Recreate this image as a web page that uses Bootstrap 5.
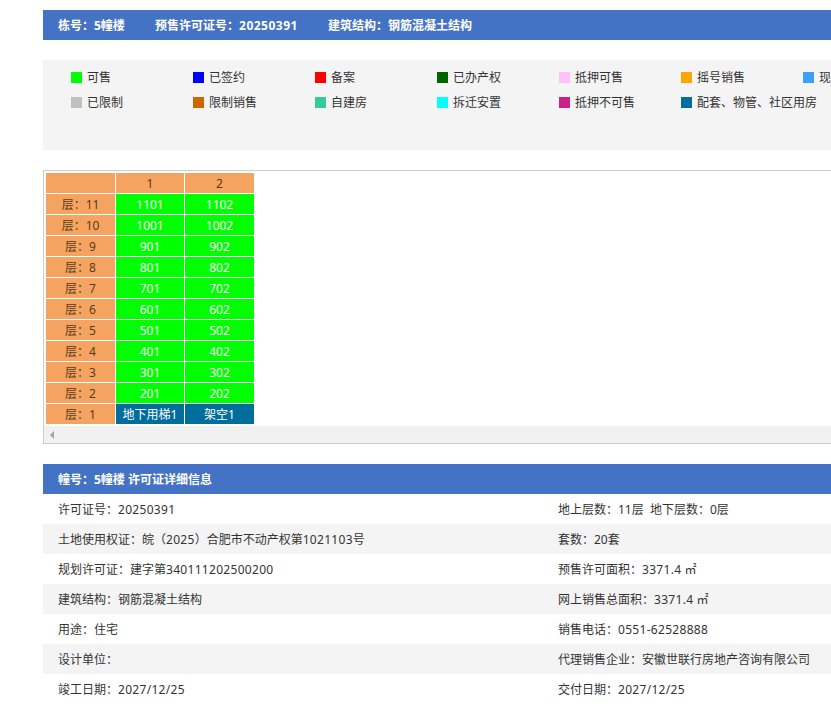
<!DOCTYPE html>
<html lang="zh-CN">
<head>
    <meta charset="UTF-8">
    <meta name="viewport" content="width=device-width, initial-scale=1.0">
    <title>楼盘表</title>
    <link href="https://cdn.jsdelivr.net/npm/bootstrap@5.3.3/dist/css/bootstrap.min.css" rel="stylesheet">
    <style>
        html, body {
            overflow: hidden;
        }

        body {
            font-family: "Noto Sans", "Noto Sans CJK SC", sans-serif;
            font-size: 12px;
            color: #333;
        }

        .page-wrap {
            width: 1000px;
            margin: 10px 0 0 43px;
        }

        .title-bar {
            height: 30px;
            line-height: 32px;
            padding-left: 15px;
            background: #4472c4;
            color: #fff;
            font-weight: 700;
        }

        .title-part {
            margin-right: 27px;
        }

        .num {
            letter-spacing: .3px;
        }

        .title-bar .num {
            letter-spacing: .5px;
        }

        .legend-box {
            height: 90px;
            margin: 20px 0;
            padding: 5px 0 0 28px;
            background: #f4f4f4;
        }

        .legend-item {
            width: 122px;
            height: 25px;
            line-height: 25px;
            white-space: nowrap;
        }

        .swatch {
            width: 11px;
            height: 11px;
            margin-right: 5px;
        }

        .build-box {
            height: 274px;
            border: 1px solid #ccc;
        }

        .build-table {
            border-collapse: separate;
            border-spacing: 1px;
            margin: 1px 0 0 1px;
            width: 210px;
            table-layout: fixed;
        }

        .col-floor, .col-last {
            width: 69px;
        }

        .col-first {
            width: 68px;
        }

        .build-table td {
            height: 20px;
            padding: 2px 0 0;
            text-align: center;
            line-height: 18px;
        }

        .floor {
            background: #f4a460;
            color: #5b3a1c;
        }

        .sale {
            background: #00ff00;
            color: #fff;
        }

        .support {
            background: #006e9c;
            color: #fff;
        }

        .h-scroll {
            height: 17px;
            margin-top: 1px;
            background: #f1f1f1;
            padding-left: 6px;
        }

        .arrow-left {
            width: 0;
            height: 0;
            border-top: 4px solid transparent;
            border-bottom: 4px solid transparent;
            border-right: 4px solid #a3a3a3;
        }

        .detail-title {
            margin-top: 20px;
        }

        .detail-row {
            height: 30px;
            line-height: 32px;
        }

        .detail-row:nth-child(even) {
            background: #f4f4f4;
        }

        .detail-cell {
            width: 500px;
            padding-left: 15px;
        }
    </style>
</head>
<body class="bg-white">
<div class="page-wrap">
    <div class="title-bar">
        <span class="title-part">栋号：5幢楼</span>
        <span class="title-part">预售许可证号：<span class="num">20250391</span></span>
        <span class="title-part">建筑结构：钢筋混凝土结构</span>
    </div>

    <div class="legend-box">
        <div class="d-flex">
            <div class="legend-item d-flex align-items-center flex-shrink-0"><i class="swatch flex-shrink-0" style="background:#00ff00"></i>可售</div>
            <div class="legend-item d-flex align-items-center flex-shrink-0"><i class="swatch flex-shrink-0" style="background:#0000ff"></i>已签约</div>
            <div class="legend-item d-flex align-items-center flex-shrink-0"><i class="swatch flex-shrink-0" style="background:#ff0000"></i>备案</div>
            <div class="legend-item d-flex align-items-center flex-shrink-0"><i class="swatch flex-shrink-0" style="background:#006400"></i>已办产权</div>
            <div class="legend-item d-flex align-items-center flex-shrink-0"><i class="swatch flex-shrink-0" style="background:#ffc0fb"></i>抵押可售</div>
            <div class="legend-item d-flex align-items-center flex-shrink-0"><i class="swatch flex-shrink-0" style="background:#ffa500"></i>摇号销售</div>
            <div class="legend-item d-flex align-items-center flex-shrink-0"><i class="swatch flex-shrink-0" style="background:#3a9fff"></i>现房销售</div>
        </div>
        <div class="d-flex">
            <div class="legend-item d-flex align-items-center flex-shrink-0"><i class="swatch flex-shrink-0" style="background:#c0c0c0"></i>已限制</div>
            <div class="legend-item d-flex align-items-center flex-shrink-0"><i class="swatch flex-shrink-0" style="background:#cc6600"></i>限制销售</div>
            <div class="legend-item d-flex align-items-center flex-shrink-0"><i class="swatch flex-shrink-0" style="background:#33cc99"></i>自建房</div>
            <div class="legend-item d-flex align-items-center flex-shrink-0"><i class="swatch flex-shrink-0" style="background:#00ffff"></i>拆迁安置</div>
            <div class="legend-item d-flex align-items-center flex-shrink-0"><i class="swatch flex-shrink-0" style="background:#cc2288"></i>抵押不可售</div>
            <div class="legend-item d-flex align-items-center flex-shrink-0"><i class="swatch flex-shrink-0" style="background:#006e9c"></i>配套、物管、社区用房</div>
        </div>
    </div>

    <div class="build-box">
        <table class="build-table">
            <colgroup><col class="col-floor"><col class="col-first"><col class="col-last"></colgroup>
            <tbody id="buildRows"></tbody>
        </table>
        <div class="h-scroll d-flex align-items-center"><div class="arrow-left"></div></div>
    </div>

    <div class="title-bar detail-title">幢号：5幢楼 许可证详细信息</div>
    <div>
        <div class="detail-row d-flex"><div class="detail-cell">许可证号：<span class="num">20250391</span></div><div class="detail-cell">地上层数：11层&nbsp;&nbsp;地下层数：0层</div></div>
        <div class="detail-row d-flex"><div class="detail-cell">土地使用权证：皖（<span class="num">2025</span>）合肥市不动产权第<span class="num">1021103</span>号</div><div class="detail-cell">套数：20套</div></div>
        <div class="detail-row d-flex"><div class="detail-cell">规划许可证：建字第<span class="num">340111202500200</span></div><div class="detail-cell">预售许可面积：<span class="num">3371.4</span> ㎡</div></div>
        <div class="detail-row d-flex"><div class="detail-cell">建筑结构：钢筋混凝土结构</div><div class="detail-cell">网上销售总面积：<span class="num">3371.4</span> ㎡</div></div>
        <div class="detail-row d-flex"><div class="detail-cell">用途：住宅</div><div class="detail-cell">销售电话：<span class="num">0551-62528888</span></div></div>
        <div class="detail-row d-flex"><div class="detail-cell">设计单位：</div><div class="detail-cell">代理销售企业：安徽世联行房地产咨询有限公司</div></div>
        <div class="detail-row d-flex"><div class="detail-cell">竣工日期：<span class="num">2027/12/25</span></div><div class="detail-cell">交付日期：<span class="num">2027/12/25</span></div></div>
    </div>
</div>

<script src="https://cdn.jsdelivr.net/npm/bootstrap@5.3.3/dist/js/bootstrap.bundle.min.js"></script>
<script>
    // Floor rows of the building table, top floor first
    let rows = '<tr><td class="floor"></td><td class="floor">1</td><td class="floor">2</td></tr>';
    for (let floor = 11; floor >= 2; floor--) {
        rows += '<tr><td class="floor">层：' + floor + '</td>'
            + '<td class="sale">' + floor + '01</td>'
            + '<td class="sale">' + floor + '02</td></tr>';
    }
    rows += '<tr><td class="floor">层：1</td><td class="support">地下用梯1</td><td class="support">架空1</td></tr>';
    document.getElementById('buildRows').innerHTML = rows;
</script>
</body>
</html>
